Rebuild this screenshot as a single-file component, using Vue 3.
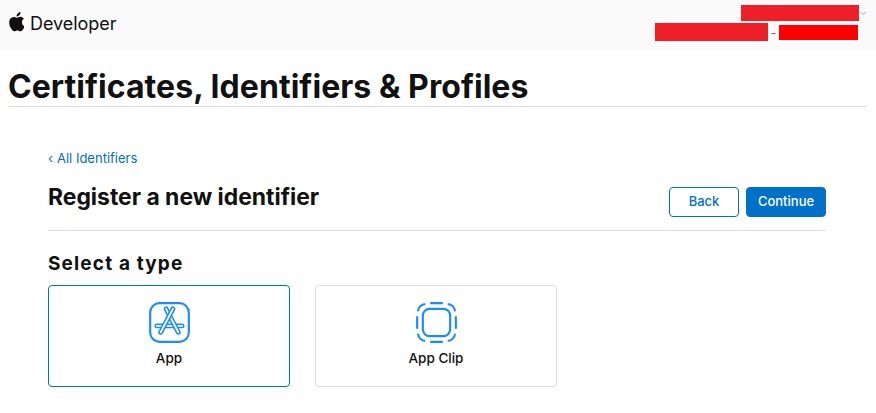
<template>
  <div class="page">
    <header class="topbar">
      <div class="brand">
        <svg class="apple" viewBox="1.6 1.5 14.4 17.8" width="16" height="20">
          <path fill="#111" d="M14.1 10.6c0-2.1 1.7-3.1 1.8-3.2-1-1.4-2.5-1.6-3-1.7-1.3-.1-2.5.8-3.2.8-.7 0-1.700-.8-2.800-.7-1.400 0-2.800.8-3.500 2.100-1.500 2.600-.4 6.500 1.100 8.600.7 1 1.600 2.200 2.700 2.200 1.100 0 1.500-.7 2.800-.7 1.300 0 1.700.7 2.800.7 1.200 0 1.900-1.100 2.600-2.100.8-1.200 1.200-2.400 1.200-2.400-.1 0-2.500-1-2.500-3.600zM11.900 4.200c.6-.7 1-1.700.9-2.700-.9 0-1.900.6-2.500 1.300-.6.6-1.100 1.600-.9 2.600 1 .1 1.900-.5 2.500-1.200z"/>
        </svg>
        <span class="brand-name">Developer</span>
      </div>
      <div class="account">
        <div class="account-top">
          <span class="redact redact-name"></span>
          <svg class="chevron" viewBox="0 0 8 5" width="8" height="5">
            <path d="M1 1l3 2.500L7 1" fill="none" stroke="#a9cdec" stroke-width="1.200"/>
          </svg>
        </div>
        <div class="account-bottom">
          <span class="redact redact-team"></span>
          <span class="dash">-</span>
          <span class="redact redact-id"></span>
        </div>
      </div>
    </header>

    <h1 class="page-title">Certificates, Identifiers &amp; Profiles</h1>

    <main class="content">
      <a class="back-link"><span class="back-arrow">‹</span>All Identifiers</a>
      <div class="heading-row">
        <h2>Register a new identifier</h2>
        <div class="actions">
          <button class="btn btn-outline">Back</button>
          <button class="btn btn-primary">Continue</button>
        </div>
      </div>
      <h3 class="section-title">Select a type</h3>
      <div class="types">
        <div v-for="t in types" :key="t.name" class="type-card" :class="{ selected: t.selected }">
          <svg v-if="t.name === 'App'" class="type-icon" viewBox="0 0 42 42" width="41" height="41" fill="none">
            <rect x="1.200" y="1.200" width="39.600" height="39.600" rx="9.500" stroke="#1a8cff" stroke-width="2.200"/>
            <g stroke-linecap="round">
              <g v-for="bar in appBars" :key="bar">
                <path :d="bar" stroke="#1a8cff" stroke-width="5"/>
                <path :d="bar" stroke="#fff" stroke-width="1.800"/>
              </g>
            </g>
          </svg>
          <svg v-else class="type-icon" viewBox="0 0 42 42" width="41" height="41" fill="none" stroke="#1a8cff" stroke-width="2.200">
            <rect x="7" y="7" width="28" height="28" rx="7"/>
            <path d="M14.500 1.200h13M14.500 40.800h13M1.200 14.500v13M40.800 14.500v13"/>
            <path d="M9.500 2a8.500 8.500 0 0 0-7.500 7.500M32.500 2a8.500 8.500 0 0 1 7.500 7.500M9.500 40a8.500 8.500 0 0 1-7.500-7.500M32.500 40a8.500 8.500 0 0 0 7.500-7.500"/>
          </svg>
          <span class="type-name">{{ t.name }}</span>
        </div>
      </div>
    </main>
  </div>
</template>

<script setup>
const types = [
  { name: 'App', selected: true },
  { name: 'App Clip', selected: false }
]

// drawn back to front, each bar is a blue stroke with a white core
const appBars = [
  'M8 24.500H34',
  'M17.500 7L30 31',
  'M24.500 7L12 31'
]
</script>

<style scoped>
.page {
  width: 876px;
  height: 413px;
  overflow: hidden;
  background: #fff;
  font-family: Inter, "Liberation Sans", sans-serif;
  color: #111;
}
.topbar {
  height: 50px;
  box-sizing: border-box;
  background: #fafafa;
  display: flex;
  justify-content: space-between;
  padding: 5px 10px 0 8px;
}
.brand {
  display: flex;
  align-items: flex-start;
  gap: 6px;
  padding-top: 7px;
}
.brand-name {
  font-size: 18px;
  line-height: 24px;
  letter-spacing: -0.05px;
}
.account {
  display: flex;
  flex-direction: column;
  align-items: flex-end;
  gap: 2px;
}
.account-top {
  display: flex;
  align-items: center;
}
.chevron {
  margin-right: -1px;
}
.account-bottom {
  display: flex;
  align-items: center;
  margin-right: 8px;
}
.redact {
  display: block;
}
.redact-name {
  width: 118px;
  height: 16px;
  background: #ee1f27;
}
.redact-team {
  width: 113px;
  height: 18px;
  background: #ee1f27;
}
.dash {
  width: 11px;
  text-align: center;
  font-size: 12px;
  color: #666;
}
.redact-id {
  width: 79px;
  height: 15px;
  background: #f00;
}
.page-title {
  margin: 0 10px 0 8px;
  height: 57px;
  line-height: 73px;
  box-sizing: border-box;
  border-bottom: 1px solid #ddd;
  font-size: 32px;
  font-weight: 700;
  letter-spacing: 0.05px;
}
.content {
  padding: 43px 50px 0 48px;
}
.back-link {
  display: block;
  font-size: 13px;
  line-height: 16px;
  color: #0070c9;
}
.back-arrow {
  display: inline-block;
  width: 9px;
}
.heading-row {
  display: flex;
  justify-content: space-between;
  margin-top: 21px;
  height: 43px;
  border-bottom: 1px solid #ddd;
}
.heading-row h2 {
  margin: 0;
  font-size: 22.900px;
  line-height: 20px;
  font-weight: 700;
}
.actions {
  display: flex;
  gap: 7px;
}
.btn {
  height: 30px;
  border-radius: 4px;
  font-family: inherit;
  font-size: 13px;
  font-weight: 500;
  padding: 0 0 2px;
}
.btn-outline {
  width: 70px;
  background: #fff;
  border: 1px solid #0070c9;
  color: #0070c9;
}
.btn-primary {
  width: 80px;
  background: #0070c9;
  border: 1px solid #0070c9;
  color: #fff;
}
.section-title {
  margin: 21px 0 9px;
  font-size: 19px;
  line-height: 24px;
  font-weight: 700;
  letter-spacing: 1.150px;
}
.types {
  display: flex;
  gap: 25px;
}
.type-card {
  width: 242px;
  height: 102px;
  box-sizing: border-box;
  border: 1px solid #ddd;
  border-radius: 4px;
  display: flex;
  flex-direction: column;
  align-items: center;
  padding-top: 16px;
}
.type-card.selected {
  border-color: #0070c9;
}
.type-name {
  margin-top: 7px;
  font-size: 13.500px;
  line-height: 16px;
  font-weight: 500;
}
</style>
